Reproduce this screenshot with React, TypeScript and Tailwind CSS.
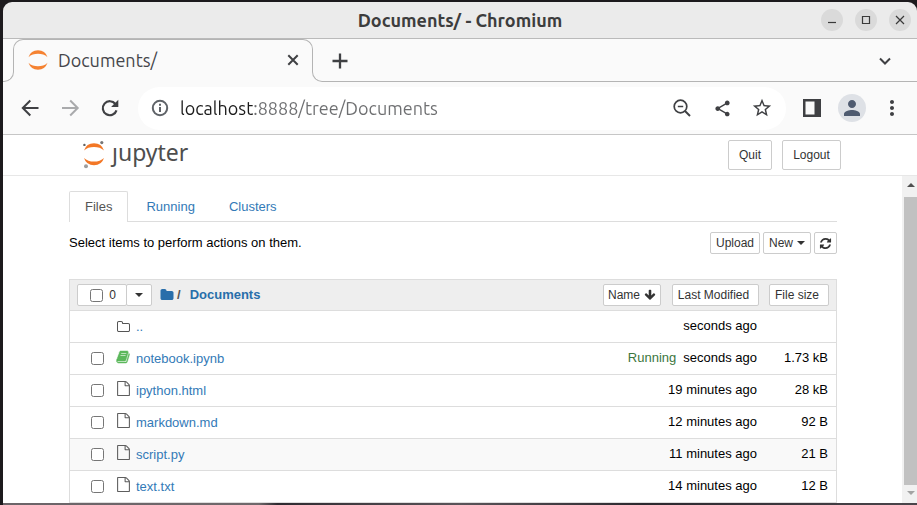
import React from "react";
import { MdShare, MdStarBorder, MdPerson, MdMoreVert } from "react-icons/md";

const GLYPHS = {
  folder:
    "M1728 608v704q0 92-66 158t-158 66h-1216q-92 0-158-66t-66-158v-960q0-92 66-158t158-66h320q92 0 158 66t66 158v32h672q92 0 158 66t66 158z",
  folderOpen:
    "M1600 1312v-704q0-40-28-68t-68-28h-704q-40 0-68-28t-28-68v-64q0-40-28-68t-68-28h-320q-40 0-68 28t-28 68v960q0 40 28 68t68 28h1216q40 0 68-28t28-68zm128-704v704q0 92-66 158t-158 66h-1216q-92 0-158-66t-66-158v-960q0-92 66-158t158-66h320q92 0 158 66t66 158v32h672q92 0 158 66t66 158z",
  file: "M1596 380q28 28 48 76t20 88v1152q0 40-28 68t-68 28h-1344q-40 0-68-28t-28-68v-1600q0-40 28-68t68-28h896q40 0 88 20t76 48zm-444-244v376h376q-10-29-22-41l-313-313q-12-12-41-22zm384 1528v-1024h-416q-40 0-68-28t-28-68v-416h-768v1536h1280z",
  book: "M1639 478q40 57 18 129l-275 906q-19 64-76.5 107.5t-122.5 43.5h-923q-77 0-148.5-53.5t-99.5-131.5q-24-67-2-127 0-4 3-27t4-37q1-8-3-21.5t-3-19.5q2-11 8-21t16.5-23.5 16.5-23.5q23-38 45-91.5t30-91.5q3-10 .5-30t-.5-28q3-11 17-28t17-23q21-36 42-92t25-90q1-9-2.5-32t.5-28q4-13 22-30.5t22-22.5q19-26 42.5-84.5t27.5-96.5q1-8-3-25.5t-2-26.5q2-8 9-18t18-23 17-21q8-12 16.5-30.5t15-35 16-36 19.5-32 26.5-23.5 36-11.5 47.5 5.5l-1 3q38-9 51-9h761q74 0 114 56t18 130l-274 906q-36 119-71.5 153.5t-128.5 34.5h-869q-27 0-38 15-11 16-1 43 24 70 144 70h923q29 0 56-15.5t35-41.5l300-987q7-22 5-57 38 15 59 43zm-1064 2q-4 13 2 22.5t20 9.5h608q13 0 25.5-9.5t16.5-22.5l21-64q4-13-2-22.5t-20-9.5h-608q-13 0-25.5 9.5t-16.5 22.5zm-83 256q-4 13 2 22.5t20 9.5h608q13 0 25.5-9.5t16.5-22.5l21-64q4-13-2-22.5t-20-9.5h-608q-13 0-25.5 9.5t-16.5 22.5z",
  refresh:
    "M1639 1056q0 5-1 7-64 268-268 434.5t-478 166.5q-146 0-282.5-55t-243.5-157l-129 129q-19 19-45 19t-45-19-19-45v-448q0-26 19-45t45-19h448q26 0 45 19t19 45-19 45l-137 137q71 66 161 102t187 36q134 0 250-65t186-179q11-17 53-117 8-23 30-23h192q13 0 22.5 9.5t9.5 22.5zm25-800v448q0 26-19 45t-45 19h-448q-26 0-45-19t-19-45 19-45l138-138q-148-137-349-137-134 0-250 65t-186 179q-11 17-53 117-8 23-30 23h-199q-13 0-22.5-9.5t-9.5-22.5v-7q65-268 270-434.5t480-166.5q146 0 284 55.5t245 156.5l130-129q19-19 45-19t45 19 19 45z",
  arrowDown:
    "M1675 832q0 53-37 90l-651 652q-39 37-91 37-53 0-90-37l-651-652q-38-36-38-90 0-53 38-91l74-75q39-37 91-37 53 0 90 37l294 294v-704q0-52 38-90t90-38h128q52 0 90 38t38 90v704l294-294q37-37 90-37 52 0 91 37l75 75q37 39 37 91z",
};

function Glyph({ name, className }: { name: keyof typeof GLYPHS; className: string }) {
  return (
    <svg viewBox="0 0 1792 1792" fill="currentColor" aria-hidden="true" className={`shrink-0 ${className}`}>
      <path d={GLYPHS[name]} />
    </svg>
  );
}

function LineIcon({ children }: { children: React.ReactNode }) {
  return (
    <svg
      viewBox="0 0 24 24"
      className="size-6 shrink-0"
      fill="none"
      stroke="currentColor"
      strokeWidth="2"
      aria-hidden="true"
    >
      {children}
    </svg>
  );
}

function Caret() {
  return <span className="inline-block border-x-4 border-t-4 border-x-transparent border-t-current" />;
}

function IconButton({ label, children }: { label: string; children: React.ReactNode }) {
  return (
    <button aria-label={label} className="flex h-10 w-10 shrink-0 items-center justify-center text-[#3f4043]">
      {children}
    </button>
  );
}

function WindowButton({ label, d }: { label: string; d: string }) {
  return (
    <button aria-label={label} className="flex size-[22px] items-center justify-center rounded-full bg-[#dadada]">
      <svg viewBox="0 0 22 22" className="size-[22px]" fill="none" stroke="#3a3a3a" strokeWidth="1.2">
        <path d={d} />
      </svg>
    </button>
  );
}

function TitleBar() {
  return (
    <header className="grid h-[37px] shrink-0 grid-cols-[1fr_auto_1fr] items-center rounded-t-[9px] border-b border-[#bababa] bg-[#ebebeb] pr-1.5">
      <h1 className="col-start-2 ml-1.5 font-['Ubuntu','Noto_Sans',sans-serif] text-[18px] leading-6 font-semibold text-[#3d3d3d]">
        Documents/ - Chromium
      </h1>
      <div className="flex justify-end gap-3">
        <WindowButton label="Minimize" d="M7 13.5h8" />
        <WindowButton label="Maximize" d="M7.5 7.5h7v7h-7z" />
        <WindowButton label="Close" d="M7 7l8 8M15 7l-8 8" />
      </div>
    </header>
  );
}

function TabStrip() {
  return (
    <div className="flex h-[43px] shrink-0 bg-[#fafafa]">
      <div className="h-3 w-[11px] shrink-0 self-end rounded-br-[10px] border-r border-b border-[#b4b4b4]" />
      <div className="-ml-px h-[31px] w-[300px] shrink-0 rounded-t-[10px] border-x border-t border-[#b4b4b4]">
        <div className="flex h-10 items-center pr-[7px] pl-[14px]">
          <svg viewBox="0 0 20 20" className="size-5" fill="#f58231" aria-hidden="true">
            <path d="M0.5 7.2a10 10 0 0 1 19 0C17 4.600 13.600 3.800 10 3.800S3 4.600 0.500 7.200zM0.500 12.800a10 10 0 0 0 19 0C17 15.400 13.600 16.200 10 16.200S3 15.400 0.500 12.800z" />
          </svg>
          <span className="ml-2.5 flex-1 font-['Ubuntu','Noto_Sans',sans-serif] text-[18px] leading-6 text-[#45464a]">
            Documents/
          </span>
          <button aria-label="Close tab" className="text-[#3f4043]">
            <LineIcon>
              <path d="M7.300 7.300l9.400 9.400M16.700 7.300l-9.400 9.400" />
            </LineIcon>
          </button>
        </div>
      </div>
      <div className="relative -ml-px flex flex-1 items-center justify-between pr-3 pl-2 before:absolute before:inset-x-0 before:bottom-0 before:h-3 before:rounded-bl-[10px] before:border-b before:border-l before:border-[#b4b4b4]">
        <IconButton label="New tab">
          <LineIcon>
            <path d="M12 4.500v15M4.500 12h15" strokeWidth="2.300" />
          </LineIcon>
        </IconButton>
        <IconButton label="Search tabs">
          <LineIcon>
            <path d="M7 9.500l5 5 5-5" />
          </LineIcon>
        </IconButton>
      </div>
    </div>
  );
}

function Toolbar() {
  return (
    <div className="flex h-[53px] shrink-0 items-center border-b border-[#c6c6c6] bg-[#fafafa] pr-[5px] pl-[7px]">
      <IconButton label="Back">
        <LineIcon>
          <path d="M20.500 12H5M12.300 4.500L4.800 12l7.500 7.500" />
        </LineIcon>
      </IconButton>
      <IconButton label="Forward">
        <span className="text-[#a9aaac]">
          <LineIcon>
            <path d="M4 12h15.500M12.200 4.500l7.500 7.500-7.500 7.500" />
          </LineIcon>
        </span>
      </IconButton>
      <IconButton label="Reload">
        <LineIcon>
          <path d="M17.400 8A7 7 0 1 0 18.500 14.300" strokeWidth="2.200" />
          <path d="M20.300 3.700v7.200h-7.200z" fill="currentColor" stroke="none" />
        </LineIcon>
      </IconButton>
      <div className="ml-2 flex h-[43px] min-w-0 flex-1 items-center rounded-full bg-white pr-1 pl-2.5">
        <span className="text-[#5f6368]">
          <LineIcon>
            <circle cx="12" cy="12" r="7.200" />
            <path d="M12 11v5M12 7.800v2" />
          </LineIcon>
        </span>
        <input
          type="text"
          aria-label="Address"
          defaultValue="localhost:8888/tree/Documents"
          className="ml-2 h-7 min-w-0 flex-1 bg-[linear-gradient(to_right,#1b1b1b_74px,#6d6e70_74px)] bg-clip-text font-['Ubuntu','Noto_Sans',sans-serif] text-[18px] text-transparent outline-none"
        />
        <IconButton label="Zoom">
          <svg viewBox="0 0 18 18" className="size-[18px]" fill="none" stroke="currentColor" aria-hidden="true">
            <circle cx="7.500" cy="7.500" r="6.300" strokeWidth="1.700" />
            <path d="M4.800 7.500h5.400" strokeWidth="1.500" />
            <path d="M12 12l5 5" strokeWidth="2" />
          </svg>
        </IconButton>
        <IconButton label="Share">
          <MdShare size={19} />
        </IconButton>
        <IconButton label="Bookmark">
          <MdStarBorder size={22} />
        </IconButton>
      </div>
      <div className="ml-1.5 flex">
        <IconButton label="Side panel">
          <svg viewBox="0 0 18 18" className="size-[18px]" fill="none" aria-hidden="true">
            <path d="M0 0h18v18H0zM2.500 2.500v13h9v-13z" fill="#3f4043" fillRule="evenodd" />
          </svg>
        </IconButton>
        <IconButton label="Profile">
          <span className="flex size-7 items-center justify-center rounded-full bg-[#dee1e6]">
            <MdPerson size={24} color="#4f5b70" />
          </span>
        </IconButton>
        <IconButton label="Menu">
          <MdMoreVert size={24} />
        </IconButton>
      </div>
    </div>
  );
}

function JupyterHeader() {
  return (
    <div className="flex h-[41px] shrink-0 items-center justify-between border-b border-[#e7e7e7] bg-white pr-[76px] pl-[79px]">
      <a href="#tree" aria-label="jupyter" className="flex items-start">
        <svg viewBox="0 0 24 30" className="h-[30px] w-6" aria-hidden="true">
          <path
            d="M2 10.600a10.500 10.500 0 0 1 20 0C19.500 8.100 16 7 12 7S4.500 8.100 2 10.600zM2 18a10.500 10.500 0 0 0 20 0C19.500 20.500 16 21.600 12 21.600S4.500 20.500 2 18z"
            fill="#f37726"
          />
          <circle cx="2.400" cy="4.900" r="1.200" fill="#616262" />
          <circle cx="19.800" cy="2.600" r="1.600" fill="#767677" />
          <circle cx="4" cy="26.300" r="2" fill="#9e9e9e" />
        </svg>
        <span className="ml-1.5 font-['Noto_Sans',sans-serif] text-[23px] leading-6 text-[#4e4e4e]">ȷupyter</span>
      </a>
      <div className="flex gap-2.5">
        <button className="h-[30px] w-11 rounded-xs border border-[#ccc] text-[12px] text-[#333]">Quit</button>
        <button className="h-[30px] w-[59px] rounded-xs border border-[#ccc] text-[12px] text-[#333]">Logout</button>
      </div>
    </div>
  );
}

const BUTTON =
  "flex h-[22px] items-center justify-center rounded-xs border border-[#ccc] bg-white text-[12px] font-normal text-[#333]";

type Item = {
  name: string;
  icon: "folderOpen" | "book" | "file";
  modified: string;
  size: string;
  running?: boolean;
  hovered?: boolean;
};

const ITEMS: Item[] = [
  { name: "..", icon: "folderOpen", modified: "seconds ago", size: "" },
  { name: "notebook.ipynb", icon: "book", modified: "seconds ago", size: "1.73 kB", running: true },
  { name: "ipython.html", icon: "file", modified: "19 minutes ago", size: "28 kB" },
  { name: "markdown.md", icon: "file", modified: "12 minutes ago", size: "92 B" },
  { name: "script.py", icon: "file", modified: "11 minutes ago", size: "21 B", hovered: true },
  { name: "text.txt", icon: "file", modified: "14 minutes ago", size: "12 B" },
];

const ICON_CLASS = {
  folderOpen: "h-[14px] w-[15px] text-[#555]",
  book: "mb-1 h-[14px] w-[15px] stroke-current stroke-[60px] text-[#5cb85c]",
  file: "mb-1 size-[15px] text-[#5e5e5e]",
};

function FileTable() {
  return (
    <table className="mt-[25px] w-full table-fixed border-separate border-spacing-0 border-x border-t border-[#ddd] text-[13px] leading-5">
      <colgroup>
        <col />
        <col className="w-[180px]" />
        <col className="w-[70px]" />
      </colgroup>
      <thead>
        <tr className="bg-[#eee]">
          <th className="h-[31px] border-b border-[#ddd] p-0 pl-[7px]">
            <div className="flex items-center">
              <div className="flex">
                <label className={`${BUTTON} w-[50px] gap-1.5 pl-0.5`}>
                  <input type="checkbox" aria-label="Select all" className="size-[13px]" />0
                </label>
                <button aria-label="Selection menu" className={`${BUTTON} -ml-px w-[26px]`}>
                  <Caret />
                </button>
              </div>
              <a href="#root" aria-label="Home" className="ml-2 text-[#296eaa]">
                <Glyph name="folder" className="size-[14px]" />
              </a>
              <span className="ml-[3px] text-[#555]">/</span>
              <a href="#documents" className="ml-[9px] text-[#296eaa]">
                Documents
              </a>
            </div>
          </th>
          <th className="border-b border-[#ddd] p-0 pr-[7px]">
            <div className="flex justify-end gap-[11px]">
              <button className={`${BUTTON} w-[58px] gap-1`}>
                Name
                <Glyph name="arrowDown" className="size-3" />
              </button>
              <button className={`${BUTTON} w-[87px] pr-1`}>Last Modified</button>
            </div>
          </th>
          <th className="border-b border-[#ddd] p-0 pr-[7px]">
            <div className="flex justify-end">
              <button className={`${BUTTON} w-[60px] pr-1`}>File size</button>
            </div>
          </th>
        </tr>
      </thead>
      <tbody>
        {ITEMS.map((item) => (
          <tr key={item.name} className={item.hovered ? "bg-[#f9f9f9]" : "bg-white"}>
            <td className="h-8 border-b border-[#ddd] p-0 pl-[21px]">
              <div className="flex items-center">
                {item.icon === "folderOpen" ? (
                  <span className="w-[13px]" />
                ) : (
                  <input type="checkbox" aria-label={`Select ${item.name}`} className="size-[13px]" />
                )}
                <a href="#item" className="ml-3 flex items-center gap-[5px] text-[#337ab7]">
                  <Glyph name={item.icon} className={ICON_CLASS[item.icon]} />
                  {item.name}
                </a>
              </div>
            </td>
            <td className="border-b border-[#ddd] p-0 pr-[9px] pb-0.5 text-right whitespace-nowrap">
              {item.running && <span className="mr-[7px] text-[#3c763d]">Running</span>}
              {item.modified}
            </td>
            <td className="border-b border-[#ddd] p-0 pr-2 pb-0.5 text-right whitespace-nowrap">{item.size}</td>
          </tr>
        ))}
      </tbody>
    </table>
  );
}

function ScrollBar() {
  return (
    <div className="flex w-[15px] shrink-0 flex-col bg-[#f1f1f1] pl-0.5">
      <button aria-label="Scroll up" className="flex h-[21px] items-center justify-center pb-1 text-[#505050]">
        <span className="border-x-4 border-b-4 border-x-transparent border-b-current" />
      </button>
      <div className="flex-1 bg-[#c1c1c1]" />
      <button aria-label="Scroll down" className="flex h-[18px] items-center justify-center pb-0.5 text-[#a3a3a3]">
        <span className="border-x-4 border-t-4 border-x-transparent border-t-current" />
      </button>
    </div>
  );
}

export default function App() {
  return (
    <div className="flex h-screen flex-col overflow-hidden bg-[#1c1a1d] pt-0.5 pl-[3px] font-['Liberation_Sans',Arial,sans-serif] text-black">
      <TitleBar />
      <TabStrip />
      <Toolbar />
      <JupyterHeader />
      <div className="flex min-h-0 flex-1 bg-white">
        <main className="min-w-0 flex-1 overflow-hidden pt-[15px] pr-[65px] pl-[66px]">
          <nav className="flex h-[31px] gap-0.5 border-b border-[#ddd] text-[13px] leading-5">
            <a
              href="#files"
              className="-mb-px flex items-center rounded-t-xs border border-b-0 border-[#ddd] bg-white px-[15px] text-[#555]"
            >
              Files
            </a>
            <a href="#running" className="-mb-px flex items-center px-4 pt-px text-[#337ab7]">
              Running
            </a>
            <a href="#clusters" className="-mb-px flex items-center px-4 pt-px text-[#337ab7]">
              Clusters
            </a>
          </nav>
          <div className="mt-2.5 flex items-center justify-between">
            <p className="text-[13px] leading-5">Select items to perform actions on them.</p>
            <div className="flex gap-[3px]">
              <button className={`${BUTTON} w-[50px]`}>Upload</button>
              <button className={`${BUTTON} w-12 gap-1`}>
                New
                <Caret />
              </button>
              <button aria-label="Refresh" className={`${BUTTON} w-[23px]`}>
                <Glyph name="refresh" className="size-[13px]" />
              </button>
            </div>
          </div>
          <FileTable />
        </main>
        <ScrollBar />
      </div>
      <div className="h-0.5 shrink-0 bg-[linear-gradient(to_right,#6b6468,#6f686b_28%,#2e2a30_30%,#5a5459_50%,#2b282e_70%,#4a454b)]" />
    </div>
  );
}
